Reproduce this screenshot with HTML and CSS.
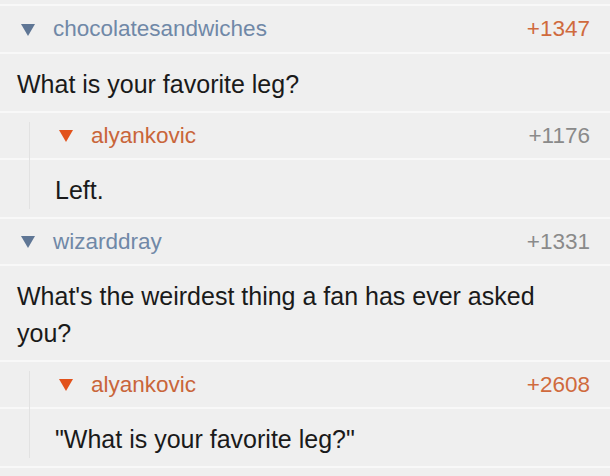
FILE: index.html
```html
<!DOCTYPE html>
<html>
<head>
<meta charset="utf-8">
<link rel="stylesheet" href="styles.css">
</head>
<body>
<div class="thread">
  <div class="spacer"></div>

  <div class="comment top first">
    <div class="head">
      <svg class="tri" width="14" height="12" viewBox="0 0 14 12"><polygon points="0,0 14,0 7,12"/></svg>
      <span class="user">chocolatesandwiches</span>
      <span class="score orange">+1347</span>
    </div>
    <div class="body">What is your favorite leg?</div>
  </div>

  <div class="comment nested">
    <div class="head">
      <svg class="tri" width="14" height="12" viewBox="0 0 14 12"><polygon points="0,0 14,0 7,12"/></svg>
      <span class="user">alyankovic</span>
      <span class="score">+1176</span>
    </div>
    <div class="body">Left.</div>
  </div>

  <div class="comment top">
    <div class="head">
      <svg class="tri" width="14" height="12" viewBox="0 0 14 12"><polygon points="0,0 14,0 7,12"/></svg>
      <span class="user">wizarddray</span>
      <span class="score">+1331</span>
    </div>
    <div class="body">What's the weirdest thing a fan has ever asked you?</div>
  </div>

  <div class="comment nested">
    <div class="head">
      <svg class="tri" width="14" height="12" viewBox="0 0 14 12"><polygon points="0,0 14,0 7,12"/></svg>
      <span class="user">alyankovic</span>
      <span class="score orange">+2608</span>
    </div>
    <div class="body">"What is your favorite leg?"</div>
  </div>
</div>
</body>
</html>
```

FILE: styles.css
```css
html, body {
  margin: 0;
  padding: 0;
  background: #efefef;
}

.thread {
  font-family: "Liberation Sans", Arial, sans-serif;
  width: 610px;
  height: 476px;
  overflow: hidden;
}

.spacer {
  height: 4px;
  border-bottom: 2px solid #f8f8f8;
}

.comment {
  position: relative;
}

.head {
  display: flex;
  align-items: center;
  height: 45px;
  padding-right: 20px;
  border-bottom: 2px solid #f8f8f8;
  font-size: 22.5px;
}

.first .head {
  height: 46px;
}

.top .head {
  padding-left: 21px;
}

.tri {
  flex: none;
  margin-right: 18px;
  margin-top: 1px;
}

.top .tri {
  fill: #5f7695;
}

.top .user {
  color: #7088a7;
}

.nested .tri {
  fill: #e2521b;
}

.nested .user {
  color: #c9653a;
}

.user {
  flex: 1;
}

.score {
  color: #8a8a8a;
}

.score.orange {
  color: #d06a3d;
}

.body {
  font-size: 25px;
  line-height: 37px;
  color: #1a1a1a;
  padding: 12px 20px 8px 17px;
  border-bottom: 2px solid #f8f8f8;
}

.nested .head {
  padding-left: 59px;
}

.nested .body {
  padding-left: 55px;
}

.nested::before {
  content: "";
  position: absolute;
  left: 29px;
  top: 9px;
  bottom: 10px;
  width: 1px;
  background: #e2e2e2;
}
```
